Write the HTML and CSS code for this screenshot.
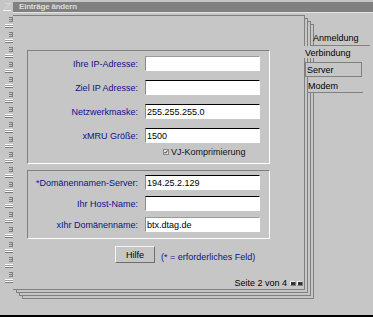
FILE: index.html
```html
<!DOCTYPE html>
<html>
<head>
  <title>Einträge ändern</title>
  <link rel="stylesheet" href="styles.css">
</head>
<body>
  <div class="window">
    <div class="titlebar">
      <svg class="close-icon" width="8" height="8" viewBox="0 0 8 8">
        <path d="M2 0.5H7.5L1.5 6" stroke="#d8d8d8" fill="none"/>
        <path d="M0 7.5H8" stroke="#f4f4f4"/>
      </svg>
      <div class="caption">Einträge ändern</div>
    </div>

    <div class="main">
      <div class="spiral">
        <div class="ring"><div class="mark"></div><div class="bar"></div></div>
        <div class="ring"><div class="mark"></div><div class="bar"></div></div>
        <div class="ring"><div class="mark"></div><div class="bar"></div></div>
        <div class="ring"><div class="mark"></div><div class="bar"></div></div>
        <div class="ring"><div class="mark"></div><div class="bar"></div></div>
        <div class="ring"><div class="mark"></div><div class="bar"></div></div>
        <div class="ring"><div class="mark"></div><div class="bar"></div></div>
        <div class="ring"><div class="mark"></div><div class="bar"></div></div>
        <div class="ring"><div class="mark"></div><div class="bar"></div></div>
        <div class="ring"><div class="mark"></div><div class="bar"></div></div>
        <div class="ring"><div class="mark"></div><div class="bar"></div></div>
        <div class="ring"><div class="mark"></div><div class="bar"></div></div>
        <div class="ring"><div class="mark"></div><div class="bar"></div></div>
        <div class="ring"><div class="mark"></div><div class="bar"></div></div>
        <div class="ring"><div class="mark"></div><div class="bar"></div></div>
        <div class="ring"><div class="mark"></div><div class="bar"></div></div>
        <div class="ring"><div class="mark"></div><div class="bar"></div></div>
        <div class="ring"><div class="mark"></div><div class="bar"></div></div>
      </div>

      <div class="page">
        <div class="group group-ip">
          <div class="form">
            <label class="lbl">Ihre IP-Adresse:</label>
            <input type="text" class="field field-soft" value="">
            <label class="lbl">Ziel IP Adresse:</label>
            <input type="text" class="field" value="">
            <label class="lbl">Netzwerkmaske:</label>
            <input type="text" class="field" value="255.255.255.0">
            <label class="lbl">xMRU Größe:</label>
            <input type="text" class="field" value="1500">
          </div>
          <div class="check-row">
            <svg class="check" width="6" height="6" viewBox="0 0 6 6">
              <rect x="0.5" y="0.5" width="5" height="5" fill="#e2e2e2" stroke="#8a8a8a"/>
              <path d="M1.5 3L2.5 4.2L4.6 1.6" stroke="#333" fill="none"/>
            </svg>
            <span>VJ-Komprimierung</span>
          </div>
        </div>

        <div class="group group-dns">
          <div class="form form-dns">
            <label class="lbl">*Domänennamen-Server:</label>
            <input type="text" class="field" value="194.25.2.129">
            <label class="lbl">Ihr Host-Name:</label>
            <input type="text" class="field" value="">
            <label class="lbl">xIhr Domänenname:</label>
            <input type="text" class="field field-soft" value="btx.dtag.de">
          </div>
        </div>

        <div class="help-row">
          <button class="btn-help">Hilfe</button>
          <span class="note">(* = erforderliches Feld)</span>
        </div>

        <div class="pager">
          <span>Seite 2 von 4</span>
          <span class="pg-btn"></span>
          <span class="pg-btn"></span>
        </div>
      </div>

      <div class="tabs">
        <div class="tab tab-back">Anmeldung</div>
        <div class="tab tab-active">Verbindung</div>
        <div class="tab tab-server">Server</div>
        <div class="tab tab-modem">Modem</div>
      </div>
    </div>
  </div>
</body>
</html>
```

FILE: styles.css
```css
* {
  box-sizing: border-box;
}
body {
  margin: 0;
  font-family: "Liberation Sans", Arial, sans-serif;
  font-size: 9px;
}
.window {
  width: 373px;
  height: 317px;
  background: #c6c6c6;
  border-bottom: 2px solid #000;
  padding-top: 2px;
  overflow: hidden;
}
.titlebar {
  display: flex;
  height: 11px;
}
.close-icon {
  margin: 1px 0 0 3px;
}
.caption {
  flex: 1;
  margin-left: 2px;
  height: 11px;
  background: #808080;
  border-bottom: 1px solid #e4e4e4;
  color: #dcdcdc;
  font-size: 8px;
  font-weight: bold;
  line-height: 10px;
  letter-spacing: -0.2px;
  padding-left: 6px;
}

.main {
  display: flex;
  height: 302px;
}

/* spiral binding */
.spiral {
  width: 13px;
  padding-top: 4px;
  display: flex;
  flex-direction: column;
}
.ring {
  height: 15px;
}
.mark {
  width: 4px;
  height: 5px;
  margin-left: 9px;
  border: 1px solid #7c7c7c;
  border-left: 0;
  background: linear-gradient(#7c7c7c, #7c7c7c) 0 1px / 100% 1px no-repeat;
}
.bar {
  width: 8px;
  height: 4px;
  margin: 2px 0 0 5px;
  background: linear-gradient(#fafafa 0 1px, #9c9c9c 1px 2px, #fafafa 2px 3px, #7a7a7a 3px 4px);
}

/* notebook page with stacked sheets behind */
.page {
  width: 292px;
  height: 275px;
  margin-top: 2px;
  border: 1px solid #808080;
  border-left: 0;
  background: #c6c6c6;
  box-shadow: 3px 3px 0 -1px #c6c6c6, 3px 3px 0 0 #808080,
              6px 6px 0 -1px #c6c6c6, 6px 6px 0 0 #808080,
              9px 9px 0 -1px #c6c6c6, 9px 9px 0 0 #808080;
}
.group {
  margin-left: 14px;
  width: 243px;
  border: 1px solid #fff;
  border-top-color: #808080;
  border-left-color: #808080;
}
.group-ip {
  margin-top: 34px;
  height: 114px;
  padding-top: 5px;
}
.group-dns {
  margin-top: 6px;
  height: 69px;
  padding-top: 4px;
}
.form {
  display: grid;
  grid-template-columns: 110px 115px;
  column-gap: 7px;
  row-gap: 9px;
  align-items: center;
}
.form-dns {
  row-gap: 6px;
}
.lbl {
  text-align: right;
  color: #10108a;
  white-space: nowrap;
}
.field {
  height: 15px;
  width: 115px;
  margin: 0;
  padding: 0 1px;
  border: 1px solid #fff;
  border-top-color: #000;
  border-left-color: #8a8a8a;
  background: #fff;
  font-family: "Liberation Sans", Arial, sans-serif;
  font-size: 9px;
  color: #000;
  outline: none;
}
.field-soft {
  border-top-color: #9a9a9a;
}
.check-row {
  display: flex;
  align-items: center;
  gap: 2px;
  margin: 4px 0 0 135px;
  height: 9px;
  color: #111;
}

.help-row {
  display: flex;
  align-items: flex-start;
  margin-top: 7px;
}
.btn-help {
  margin: 0 0 0 102px;
  width: 40px;
  height: 17px;
  padding: 0;
  background: #c6c6c6;
  border: 1px solid #6e6e6e;
  border-top-color: #f4f4f4;
  border-left-color: #f4f4f4;
  font-family: "Liberation Sans", Arial, sans-serif;
  font-size: 9px;
  color: #000;
}
.note {
  margin: 6px 0 0 6px;
  color: #10108a;
  line-height: 10px;
}

.pager {
  display: flex;
  justify-content: flex-end;
  align-items: center;
  gap: 1px;
  margin-top: 16px;
  padding-right: 1px;
  height: 9px;
  line-height: 9px;
  color: #000;
}
.pager span:first-child {
  margin-right: 2px;
}
.pg-btn {
  width: 6px;
  height: 5px;
  border: 1px solid #eaeaea;
  border-right-color: #7a7a7a;
  border-bottom-color: #7a7a7a;
  background: #333;
}

/* tabs on the right edge */
.tabs {
  margin-left: -1px;
  width: 69px;
  display: flex;
  flex-direction: column;
}
.tab {
  line-height: 10px;
  color: #000;
}
.tab-back {
  margin: 9px 0 0 7px;
  width: 59px;
  height: 24px;
  padding: 11px 0 0 2px;
  border-bottom: 1px solid #808080;
}
.tab-active {
  width: 62px;
  height: 12px;
  padding: 2px 0 0 1px;
  background: #c6c6c6;
}
.tab-server {
  margin: 4px 0 0 1px;
  width: 57px;
  height: 15px;
  padding: 2px 0 0 1px;
  border: 1px solid #808080;
  background: #c6c6c6;
}
.tab-modem {
  margin-left: 4px;
  width: 55px;
  height: 16px;
  padding: 4px 0 0 0;
  border-bottom: 1px solid #808080;
  background: #c6c6c6;
}
```
